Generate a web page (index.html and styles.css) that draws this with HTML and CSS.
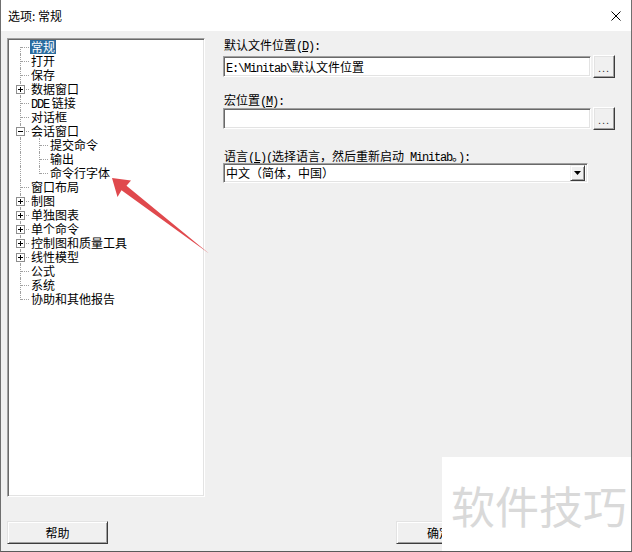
FILE: index.html
```html
<!DOCTYPE html>
<html lang="zh-CN">
<head>
<meta charset="utf-8">
<title>选项: 常规</title>
<link rel="stylesheet" href="styles.css">
</head>
<body>
<div class="dialog">
  <div class="titlebar">
    <span class="title">选项: 常规</span>
    <svg class="close" width="10" height="10" viewBox="0 0 10 10"><path d="M0.5 0.5 L9.5 9.5 M9.5 0.5 L0.5 9.5" stroke="#000" stroke-width="1" fill="none"/></svg>
  </div>
  <div class="body">
    <div class="main">
      <div class="tree">
        <div class="row"><span class="stub"><i class="vb"></i><i class="h"></i></span><span class="label sel">常规</span></div>
        <div class="row"><span class="stub"><i class="v"></i><i class="h"></i></span><span class="label">打开</span></div>
        <div class="row"><span class="stub"><i class="v"></i><i class="h"></i></span><span class="label">保存</span></div>
        <div class="row"><span class="stub"><i class="v"></i><i class="h"></i><b class="box plus"></b></span><span class="label">数据窗口</span></div>
        <div class="row"><span class="stub"><i class="v"></i><i class="h"></i></span><span class="label"><span class="lat">DDE</span> 链接</span></div>
        <div class="row"><span class="stub"><i class="v"></i><i class="h"></i></span><span class="label">对话框</span></div>
        <div class="row"><span class="stub"><i class="v"></i><i class="h"></i><b class="box"></b></span><span class="label">会话窗口</span></div>
        <div class="row"><span class="stub s1"><i class="v"></i><i class="v1"></i><i class="h1"></i></span><span class="label">提交命令</span></div>
        <div class="row"><span class="stub s1"><i class="v"></i><i class="v1"></i><i class="h1"></i></span><span class="label">输出</span></div>
        <div class="row"><span class="stub s1"><i class="v"></i><i class="v1t"></i><i class="h1"></i></span><span class="label">命令行字体</span></div>
        <div class="row"><span class="stub"><i class="v"></i><i class="h"></i></span><span class="label">窗口布局</span></div>
        <div class="row"><span class="stub"><i class="v"></i><i class="h"></i><b class="box plus"></b></span><span class="label">制图</span></div>
        <div class="row"><span class="stub"><i class="v"></i><i class="h"></i><b class="box plus"></b></span><span class="label">单独图表</span></div>
        <div class="row"><span class="stub"><i class="v"></i><i class="h"></i><b class="box plus"></b></span><span class="label">单个命令</span></div>
        <div class="row"><span class="stub"><i class="v"></i><i class="h"></i><b class="box plus"></b></span><span class="label">控制图和质量工具</span></div>
        <div class="row"><span class="stub"><i class="v"></i><i class="h"></i><b class="box plus"></b></span><span class="label">线性模型</span></div>
        <div class="row"><span class="stub"><i class="v"></i><i class="h"></i></span><span class="label">公式</span></div>
        <div class="row"><span class="stub"><i class="v"></i><i class="h"></i></span><span class="label">系统</span></div>
        <div class="row"><span class="stub"><i class="vt"></i><i class="h"></i></span><span class="label">协助和其他报告</span></div>
      </div>
      <div class="form">
        <div class="flabel">默认文件位置<span class="lat">(<u>D</u>):</span></div>
        <div class="field-row">
          <div class="input"><span class="lat">E:\Minitab\</span>默认文件位置</div>
          <div class="browse">...</div>
        </div>
        <div class="flabel second">宏位置<span class="lat">(<u>M</u>):</span></div>
        <div class="field-row">
          <div class="input"></div>
          <div class="browse">...</div>
        </div>
        <div class="flabel third">语言<span class="lat">(<u>L</u>)(</span>选择语言，然后重新启动<span class="lat"> Minitab</span>。<span class="lat">):</span></div>
        <div class="select">
          <span class="sel-text">中文（简体，中国）</span>
          <span class="drop"><svg width="7" height="4" viewBox="0 0 7 4"><path d="M0 0 H7 L3.5 4 Z" fill="#000"/></svg></span>
        </div>
      </div>
    </div>
    <div class="buttons">
      <div class="btn">帮助</div>
      <div class="right-btns">
        <div class="btn narrow">确定</div>
        <div class="btn narrow">取消</div>
      </div>
    </div>
  </div>
  <div class="watermark">软件技巧</div>
  <svg class="arrow" width="632" height="552" viewBox="0 0 632 552">
    <polygon points="112,178 131,180.5 126.5,185.8 209,253.5 121.5,190.2 117.5,197" fill="#e0494d"/>
  </svg>
</div>
</body>
</html>
```

FILE: styles.css
```css
* { box-sizing: border-box; }
html, body { margin: 0; padding: 0; background: #fff; }
body { font-family: "Noto Sans CJK SC", "Noto Sans", sans-serif; font-size: 12px; color: #000; }

.dialog {
  position: relative;
  width: 632px;
  height: 552px;
  border-left: 1px solid #6f6f6f;
  border-right: 1px solid #6f6f6f;
  border-bottom: 1px solid #5a5a5a;
  overflow: hidden;
  display: flex;
  flex-direction: column;
}

.titlebar {
  height: 31px;
  background: #fff;
  display: flex;
  align-items: center;
  justify-content: space-between;
  padding: 0 10px 0 7px;
  flex: none;
}
.title { font-size: 12px; line-height: 14px; }
.close { display: block; }

.body {
  flex: 1;
  background: #f0f0f0;
  padding: 7px 0 7px 6px;
  display: flex;
  flex-direction: column;
}

.main { display: flex; height: 459px; flex: none; }

.tree {
  width: 198px;
  height: 459px;
  background: #fff;
  border: 1px solid;
  border-color: #a0a0a0 #fff #fff #a0a0a0;
  box-shadow: inset 1px 1px #696969, inset -1px -1px #e3e3e3;
  padding: 1px 0 0 1px;
  flex: none;
}

.row { display: flex; height: 14px; align-items: stretch; }
.stub { position: relative; width: 21px; height: 14px; flex: none; }
.stub.s1 { width: 40px; }
.stub i { position: absolute; display: block; }
.stub .v { left: 11px; top: 0; height: 14px; border-left: 1px dotted #a0a0a0; }
.stub .vb { left: 11px; top: 7px; height: 7px; border-left: 1px dotted #a0a0a0; }
.stub .vt { left: 11px; top: 0; height: 8px; border-left: 1px dotted #a0a0a0; }
.stub .h { left: 12px; top: 7px; width: 8px; border-top: 1px dotted #a0a0a0; }
.stub .v1 { left: 30px; top: 0; height: 14px; border-left: 1px dotted #a0a0a0; }
.stub .v1t { left: 30px; top: 0; height: 8px; border-left: 1px dotted #a0a0a0; }
.stub .h1 { left: 31px; top: 7px; width: 8px; border-top: 1px dotted #a0a0a0; }

.box {
  position: absolute;
  left: 7px;
  top: 3px;
  width: 9px;
  height: 9px;
  border: 1px solid #8e8e8e;
  background: #fff;
}
.box::before {
  content: "";
  position: absolute;
  left: 1px;
  top: 3px;
  width: 5px;
  height: 1px;
  background: #000;
}
.box.plus::after {
  content: "";
  position: absolute;
  left: 3px;
  top: 1px;
  width: 1px;
  height: 5px;
  background: #000;
}

.label { font-size: 12px; line-height: 14px; padding: 0 1px; white-space: nowrap; }
.label.sel { background: #2b6c9f; color: #fff; }

.lat {
  font-family: "Liberation Mono", monospace;
  font-size: 12px;
  letter-spacing: -1.2px;
}

.form {
  margin-left: 18px;
  width: 392px;
  display: flex;
  flex-direction: column;
}
.flabel { font-size: 12px; line-height: 14px; height: 14px; padding-left: 1px; white-space: nowrap; }
.flabel.second { margin-top: 15px; }
.flabel.third { margin-top: 19px; }

.field-row { display: flex; align-items: center; height: 23px; margin-top: 3px; }
.flabel.second + .field-row { margin-top: 0; }

.input {
  width: 368px;
  height: 21px;
  background: #fff;
  border: 1px solid;
  border-color: #a0a0a0 #fff #fff #a0a0a0;
  box-shadow: inset 1px 1px #696969, inset -1px -1px #e3e3e3;
  padding: 0 2px;
  font-size: 12px;
  line-height: 19px;
  white-space: nowrap;
}

.browse {
  width: 22px;
  height: 23px;
  margin-left: 2px;
  border: 1px solid;
  border-color: #fff #3c3c3c #3c3c3c #fff;
  box-shadow: inset -1px -1px #a0a0a0, inset 1px 1px #e3e3e3;
  background: #f0f0f0;
  font-family: "Liberation Sans", sans-serif;
  font-size: 11px;
  letter-spacing: 1px;
  line-height: 11px;
  padding-top: 7px;
  text-align: center;
  color: #333;
}

.select {
  width: 365px;
  height: 20px;
  background: #fff;
  border: 1px solid;
  border-color: #a0a0a0 #fff #fff #a0a0a0;
  box-shadow: inset 1px 1px #696969, inset -1px -1px #e3e3e3;
  display: flex;
  align-items: center;
  justify-content: space-between;
  padding: 1px 2px 1px 1px;
}
.sel-text { font-size: 12px; line-height: 14px; padding-left: 1px; }
.drop {
  width: 15px;
  height: 16px;
  border: 1px solid;
  border-color: #f0f0f0 #3c3c3c #3c3c3c #f0f0f0;
  box-shadow: inset 1px 1px #fff, inset -1px -1px #a0a0a0;
  background: #f0f0f0;
  display: flex;
  align-items: center;
  justify-content: center;
}
.drop svg { display: block; }

.buttons {
  margin-top: 24px;
  display: flex;
  justify-content: space-between;
  padding-right: 54px;
}
.right-btns { display: flex; gap: 9px; }
.btn {
  width: 101px;
  height: 23px;
  border: 1px solid;
  border-color: #e3e3e3 #3c3c3c #3c3c3c #e3e3e3;
  box-shadow: inset 1px 1px #fff, inset -1px -1px #a0a0a0;
  background: #f0f0f0;
  text-align: center;
  font-size: 12px;
  line-height: 21px;
}
.btn.narrow { width: 86px; }

.watermark {
  position: absolute;
  left: 441px;
  top: 457px;
  right: -1px;
  bottom: -1px;
  background: #fff;
  color: #d9d9d9;
  font-size: 44px;
  display: flex;
  align-items: center;
  justify-content: center;
  padding-left: 4px;
  letter-spacing: 0;
}

.arrow { position: absolute; left: -1px; top: 0; pointer-events: none; }
```
